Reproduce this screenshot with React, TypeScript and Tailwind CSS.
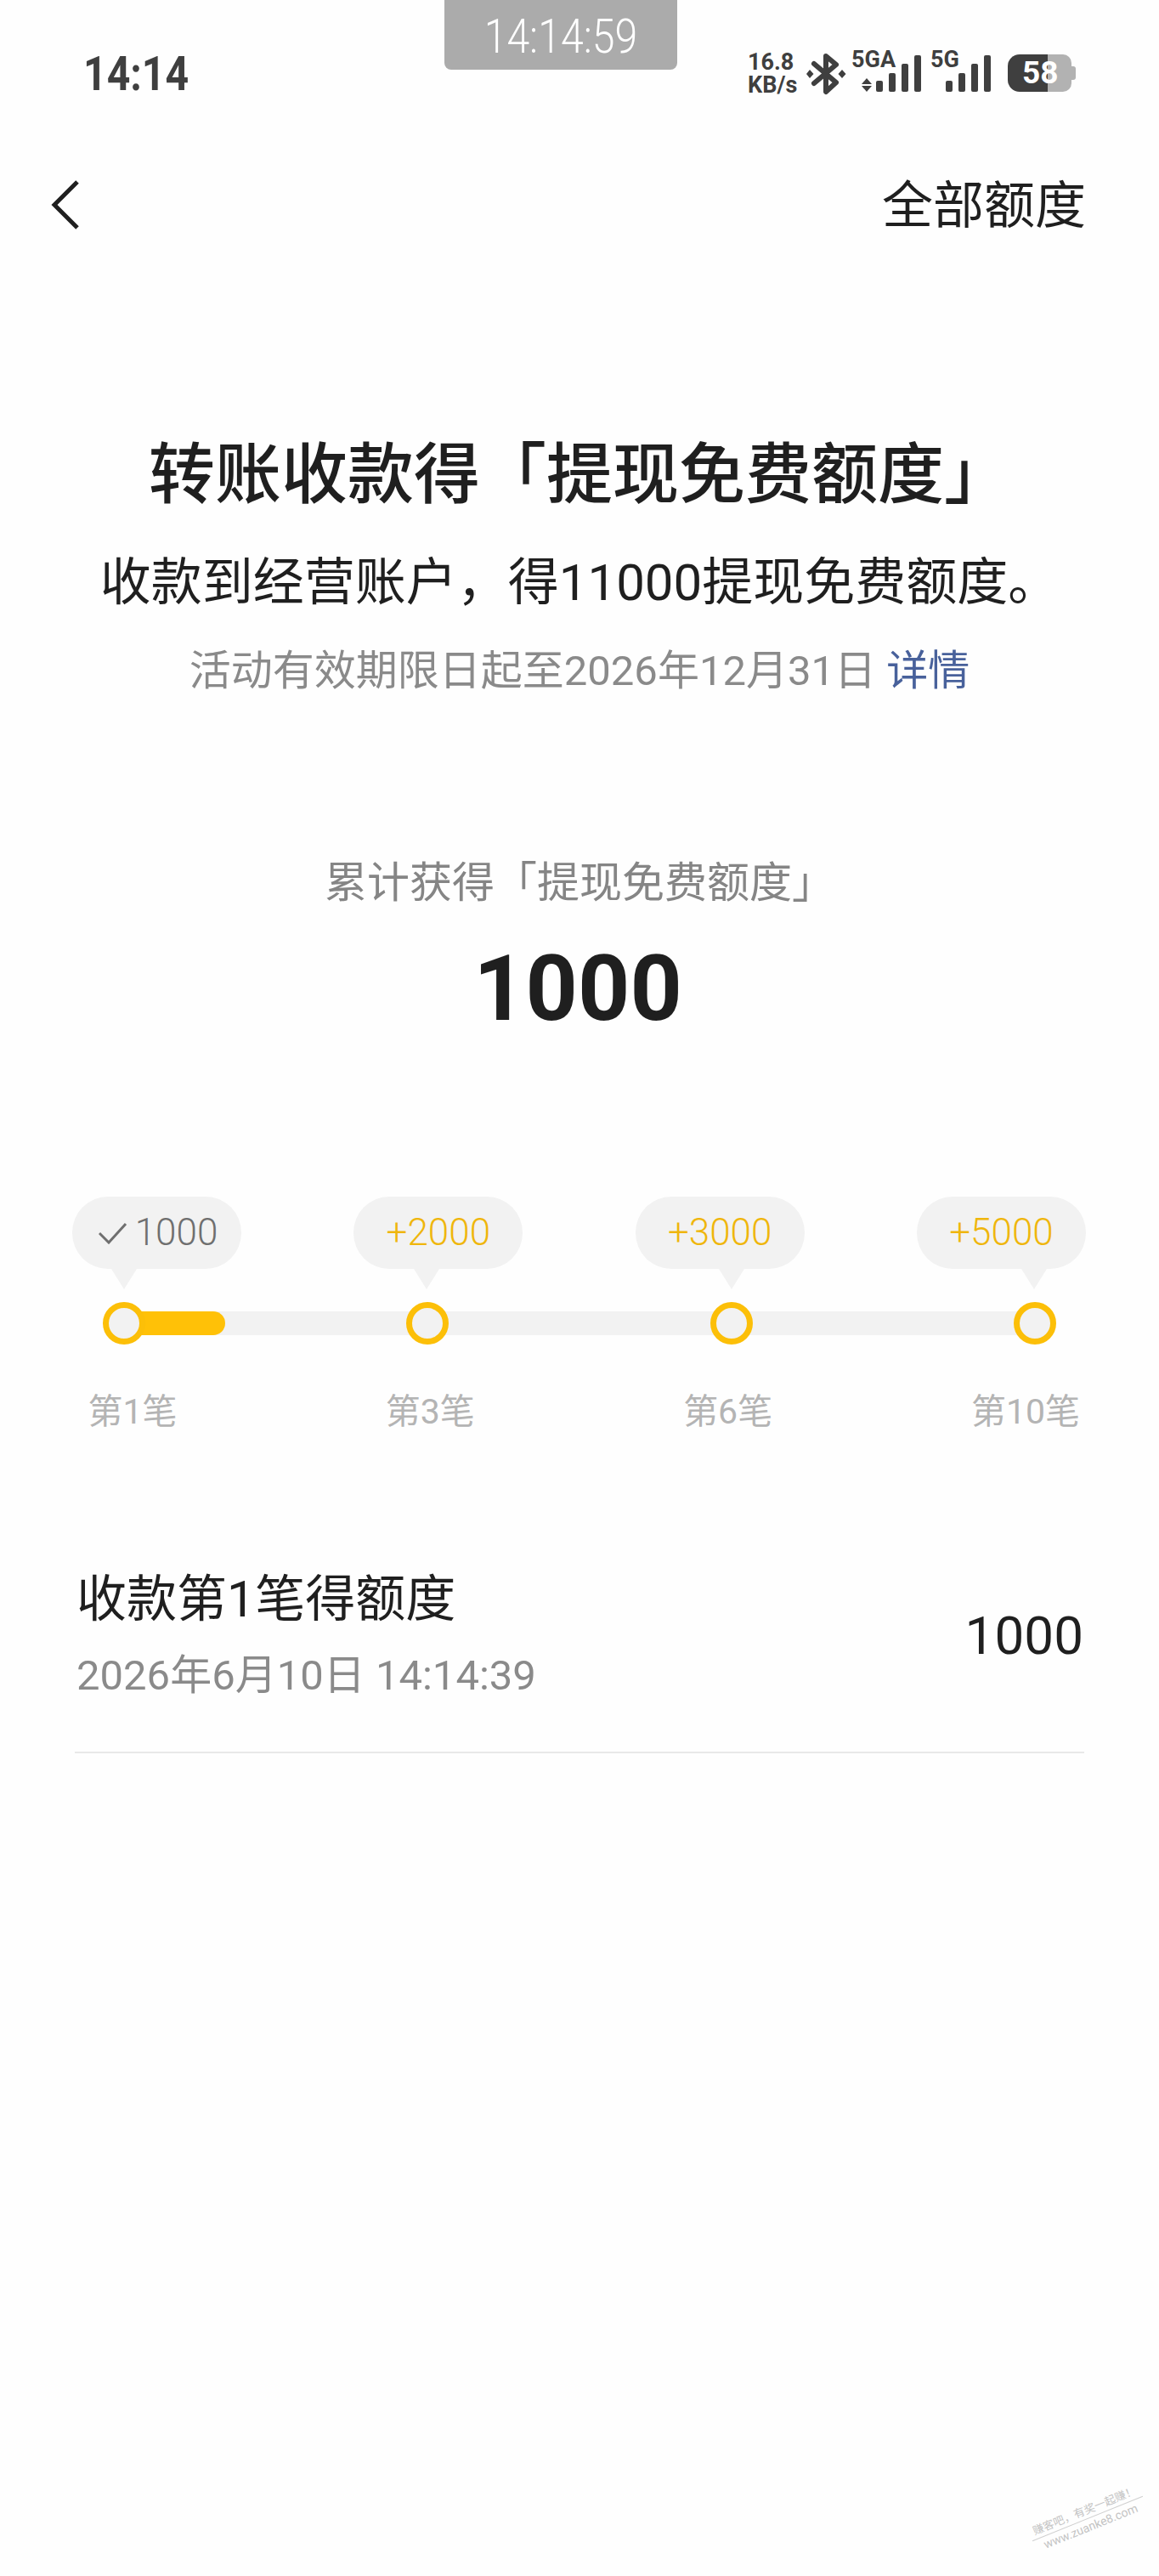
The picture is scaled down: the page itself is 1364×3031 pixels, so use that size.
import React from "react";

const font = { fontFamily: "Roboto, 'Noto Sans CJK SC', sans-serif" };

function Signal() {
  return (
    <svg width="53" height="43" viewBox="0 0 53 43" fill="#3f3f3f">
      <rect x="0" y="30" width="8" height="13" rx="2" />
      <rect x="15" y="21" width="8" height="22" rx="2" />
      <rect x="30" y="10" width="8" height="33" rx="2" />
      <rect x="45" y="0" width="8" height="43" rx="2" />
    </svg>
  );
}

function Bluetooth() {
  return (
    <svg width="47" height="50" viewBox="0 0 47 50" fill="none">
      <path d="M9 13 L35 35 L23 46 L23 4 L35 14 L9 36" stroke="#3f3f3f" strokeWidth="6" strokeLinejoin="round" strokeLinecap="round" />
      <path d="M4 20 L8.5 25 L4 30 L0 25 Z M42 20 L46.5 25 L42 30 L37.5 25 Z" fill="#3f3f3f" />
    </svg>
  );
}

function StatusBar() {
  return (
    <div className="relative flex h-[110px] items-end justify-between pl-[98px] pr-[97px]">
      <div className="h-[50px] w-[120px] origin-left scale-x-[0.86] text-[56px] font-bold leading-[54px] text-[#3f3f3f] whitespace-nowrap">
        14:14
      </div>
      <div className="flex h-[50px] items-start">
        <div className="mr-[11px] flex w-[58px] flex-col text-[27px] font-bold leading-[27px] text-[#3f3f3f]">
          <span className="whitespace-nowrap">16.8</span>
          <span className="whitespace-nowrap">KB/s</span>
        </div>
        <div className="mr-[6px] mt-[2px]"><Bluetooth /></div>
        <div className="relative mr-[10px] h-[50px] w-[83px]">
          <span className="absolute left-0 top-[-4px] text-[27px] font-bold leading-[28px] text-[#3f3f3f]">5GA</span>
          <svg className="absolute left-[12px] top-[32px]" width="12" height="16" viewBox="0 0 12 16" fill="#3f3f3f">
            <path d="M6 0 L12 7 L0 7 Z M0 9 L12 9 L6 16 Z" />
          </svg>
          <div className="absolute left-[29px] top-[5px]"><Signal /></div>
        </div>
        <div className="relative mr-[20px] h-[50px] w-[71px]">
          <span className="absolute left-0 top-[-4px] text-[27px] font-bold leading-[28px] text-[#3f3f3f]">5G</span>
          <div className="absolute left-[18px] top-[5px]"><Signal /></div>
        </div>
        <div className="relative mt-[4px] flex h-[44px] w-[81px] items-center">
          <div className="h-[44px] w-[47px] rounded-l-[14px] bg-[#3f3f3f]" />
          <div className="h-[44px] w-[28px] rounded-r-[10px] bg-[#b2b2b2]" />
          <div className="h-[16px] w-[5px] rounded-r-[3px] bg-[#b2b2b2]" />
          <span className="absolute left-[17px] top-0 text-[37px] font-bold leading-[44px] text-white">58</span>
        </div>
      </div>
      <div className="absolute left-[523px] top-0 flex h-[82px] w-[274px] items-start justify-center rounded-b-[8px] bg-[#ababab] pt-[13px]">
        <span className="scale-x-[0.86] text-[56px] font-light leading-[60px] text-white whitespace-nowrap">14:14:59</span>
      </div>
    </div>
  );
}

function Nav() {
  return (
    <div className="mt-[90px] flex h-[80px] items-center justify-between pl-[60px] pr-[86px]">
      <svg className="mt-[2px]" width="34" height="60" viewBox="0 0 34 60" fill="none">
        <path d="M31 3 L4 30 L31 57" stroke="#1f1f1f" strokeWidth="5" />
      </svg>
      <span className="pt-[6px] text-[60px] leading-[80px] text-[#1f1f1f]">全部额度</span>
    </div>
  );
}

const bubbles = [
  { text: "1000", tail: "left-[46px]", check: true },
  { text: "+2000", tail: "left-[71px]" },
  { text: "+3000", tail: "left-[98px]" },
  { text: "+5000", tail: "left-[123px]" },
];

function Bubble({ text, tail, check }: { text: string; tail: string; check?: boolean }) {
  return (
    <div className={`relative flex h-[85px] w-[199px] items-center justify-center rounded-[42px] bg-[#f2f2f2] text-[44px] font-light leading-[85px] ${check ? "text-[#6f6f6f]" : "text-[#efb60c]"}`}>
      {check && (
        <svg className="mr-[9px] ml-[3px]" width="34" height="26" viewBox="0 0 34 26" fill="none">
          <path d="M1 13 L12 24 L32 2" stroke="#6f6f6f" strokeWidth="3" />
        </svg>
      )}
      {text}
      <svg className={`absolute top-[85px] ${tail}`} width="30" height="24" viewBox="0 0 30 24" fill="#f2f2f2">
        <path d="M0 0 L30 0 L15 24 Z" />
      </svg>
    </div>
  );
}

function Ring() {
  return <div className="relative h-[50px] w-[50px] rounded-full border-[7px] border-[#fcbf08] bg-[#f2f2f2]" />;
}

function Progress() {
  return (
    <div className="mt-[179px]">
      <div className="flex justify-between pl-[85px] pr-[86px]">
        {bubbles.map((b) => (
          <Bubble key={b.text} text={b.text} tail={b.tail} check={b.check} />
        ))}
      </div>
      <div className="relative mx-[121px] mt-[39px] flex h-[50px] items-center justify-between">
        <div className="absolute left-[25px] right-[25px] top-[11px] h-[28px] bg-[#f2f2f2]" />
        <div className="absolute left-[25px] top-[11px] h-[28px] w-[119px] rounded-r-[14px] bg-[#ffc107]" />
        <Ring />
        <Ring />
        <Ring />
        <Ring />
      </div>
      <div className="mt-[54px] flex justify-between pl-[56px] pr-[57px]">
        {["第1笔", "第3笔", "第6笔", "第10笔"].map((t) => (
          <div key={t} className="w-[200px] text-center text-[41px] leading-[50px] text-[#b4b4b4]">{t}</div>
        ))}
      </div>
    </div>
  );
}

export default function App() {
  return (
    <div className="relative min-h-[3031px] overflow-hidden bg-[#fefefe]" style={font}>
      <StatusBar />
      <Nav />
      <h1 className="mt-[235px] text-center text-[78px] font-medium leading-[90px] text-[#1f1f1f]">转账收款得「提现免费额度」</h1>
      <p className="mt-[41px] text-center text-[60px] leading-[80px] text-[#1f1f1f]">收款到经营账户，得11000提现免费额度。</p>
      <p className="mt-[34px] text-center text-[49px] leading-[60px] text-[#8a8a8a]">
        活动有效期限日起至2026年12月31日 <span className="text-[#48619b]">详情</span>
      </p>
      <p className="mt-[189px] text-center text-[50px] leading-[60px] text-[#858585]">累计获得「提现免费额度」</p>
      <p className="mt-[30px] pr-[4px] text-center text-[107px] font-bold leading-[130px] text-[#1f1f1f]">1000</p>
      <Progress />
      <div className="mx-[88px] mt-[161px] flex items-center justify-between border-b-2 border-[#e9e9e9] pb-[59px]">
        <div className="pl-[2px]">
          <div className="text-[59px] leading-[70px] text-[#1f1f1f]">收款第1笔得额度</div>
          <div className="mt-[25px] text-[49px] leading-[60px] text-[#8a8a8a]">2026年6月10日 14:14:39</div>
        </div>
        <div className="pr-[1px] text-[62px] leading-[70px] text-[#1f1f1f]">1000</div>
      </div>
      <div className="absolute left-[1210px] top-[2945px] w-[140px] -rotate-[22deg] text-center text-[#c4c4c4]">
        <div className="border-b border-[#cfcfcf] text-[13px] leading-[18px] whitespace-nowrap">赚客吧，有奖一起赚！</div>
        <div className="text-[14px] leading-[18px] whitespace-nowrap">www.zuanke8.com</div>
      </div>
    </div>
  );
}
